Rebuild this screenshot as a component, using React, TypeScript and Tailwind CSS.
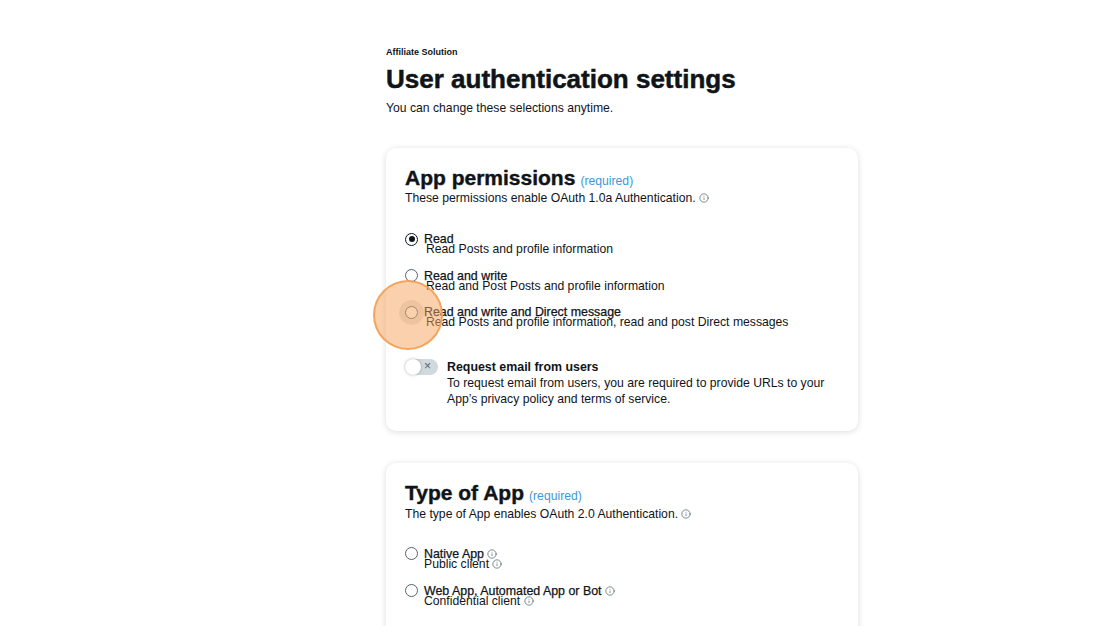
import { Info } from "lucide-react";

function InfoIcon() {
  return <Info size={10} strokeWidth={1.8} className="inline-block text-[#536471] align-[-1px]" />;
}

function Radio({ checked, halo }: { checked?: boolean; halo?: boolean }) {
  return (
    <div className="relative mt-[-1.5px] h-[13px] w-[13px] shrink-0">
      {halo && <div className="absolute left-[-6px] top-[-6px] h-[25px] w-[25px] rounded-full bg-black/10" />}
      {checked ? (
        <div className="relative flex h-[13px] w-[13px] items-center justify-center rounded-full border-[1.5px] border-[#0f1419] bg-white">
          <div className="h-[6px] w-[6px] rounded-full bg-[#0f1419]" />
        </div>
      ) : (
        <div className="relative h-[13px] w-[13px] rounded-full border border-[#536471] bg-white" />
      )}
      {halo && (
        <div className="absolute left-[-32px] top-[-26px] z-10 h-[70px] w-[70px] rounded-full border-[2.5px] border-[#f4a058]/90 bg-[#f7a35c]/50" />
      )}
    </div>
  );
}

function Option({
  label,
  desc,
  checked,
  halo,
  shift,
}: {
  label: React.ReactNode;
  desc: React.ReactNode;
  checked?: boolean;
  halo?: boolean;
  shift?: boolean;
}) {
  return (
    <div className="flex items-start gap-[6px]">
      <Radio checked={checked} halo={halo} />
      <div className="flex flex-col">
        <span className="text-[12.4px] leading-[10px] text-[#0f1419] [-webkit-text-stroke:0.25px_#0f1419]">{label}</span>
        <span className={`text-[12.2px] leading-[10px] text-[#0f1419] ${shift ? "ml-[2px]" : ""}`}>{desc}</span>
      </div>
    </div>
  );
}

function CardTitle({ title, desc }: { title: string; desc: string }) {
  return (
    <>
      <div className="flex items-baseline gap-[5px]">
        <h2 className="text-[21px] font-extrabold leading-[24px] text-[#0f1419] [-webkit-text-stroke:0.4px_#0f1419]">{title}</h2>
        <span className="text-[12.2px] text-[#3d98d6]">(required)</span>
      </div>
      <p className="text-[12.2px] leading-[16px] text-[#0f1419]">
        {desc} <InfoIcon />
      </p>
    </>
  );
}

export default function App() {
  return (
    <div className="min-h-screen overflow-hidden bg-white pl-[386px] pt-[47px] font-['Liberation_Sans',Arial,sans-serif]">
      <div className="w-[472px]">
        <p className="text-[9px] font-bold leading-[11px] text-[#0f1419]">Affiliate Solution</p>
        <h1 className="mt-[6px] text-[26px] font-extrabold leading-[30px] text-[#0f1419] [-webkit-text-stroke:0.5px_#0f1419]">
          User authentication settings
        </h1>
        <p className="mt-[6px] text-[12.2px] leading-[16px] text-[#0f1419]">You can change these selections anytime.</p>

        <section className="mt-[32px] rounded-[10px] bg-white px-[19px] pb-[24px] pt-[18px] shadow-[0_1px_6px_rgba(0,0,0,0.14)]">
          <CardTitle title="App permissions" desc="These permissions enable OAuth 1.0a Authentication." />
          <div className="mt-[28px] flex flex-col gap-[16.5px]">
            <Option checked label="Read" desc="Read Posts and profile information" shift />
            <Option label="Read and write" desc="Read and Post Posts and profile information" shift />
            <Option
              halo
              label="Read and write and Direct message"
              desc="Read Posts and profile information, read and post Direct messages"
              shift
            />
          </div>
          <div className="mt-[32px] flex items-start gap-[9px]">
            <div className="relative h-[16px] w-[33px] shrink-0 rounded-full bg-[#cfd9de]">
              <div className="absolute left-0 top-0 h-[16px] w-[16px] rounded-full bg-white shadow-[0_0_3px_rgba(0,0,0,0.3)]" />
              <span className="absolute left-[19px] top-[-1px] text-[12px] leading-[16px] text-[#536471]">×</span>
            </div>
            <div className="flex flex-col">
              <span className="text-[12.4px] font-bold leading-[16px] text-[#0f1419]">Request email from users</span>
              <span className="text-[12.2px] leading-[16px] text-[#0f1419]">
                To request email from users, you are required to provide URLs to your App’s privacy policy and terms of service.
              </span>
            </div>
          </div>
        </section>

        <section className="mt-[32px] rounded-[10px] bg-white px-[19px] pb-[40px] pt-[18px] shadow-[0_1px_6px_rgba(0,0,0,0.14)]">
          <CardTitle title="Type of App" desc="The type of App enables OAuth 2.0 Authentication." />
          <div className="mt-[27px] flex flex-col gap-[17px]">
            <Option
              label={<>Native App <InfoIcon /></>}
              desc={<>Public client <InfoIcon /></>}
            />
            <Option
              label={<>Web App, Automated App or Bot <InfoIcon /></>}
              desc={<>Confidential client <InfoIcon /></>}
            />
          </div>
        </section>
      </div>
    </div>
  );
}
